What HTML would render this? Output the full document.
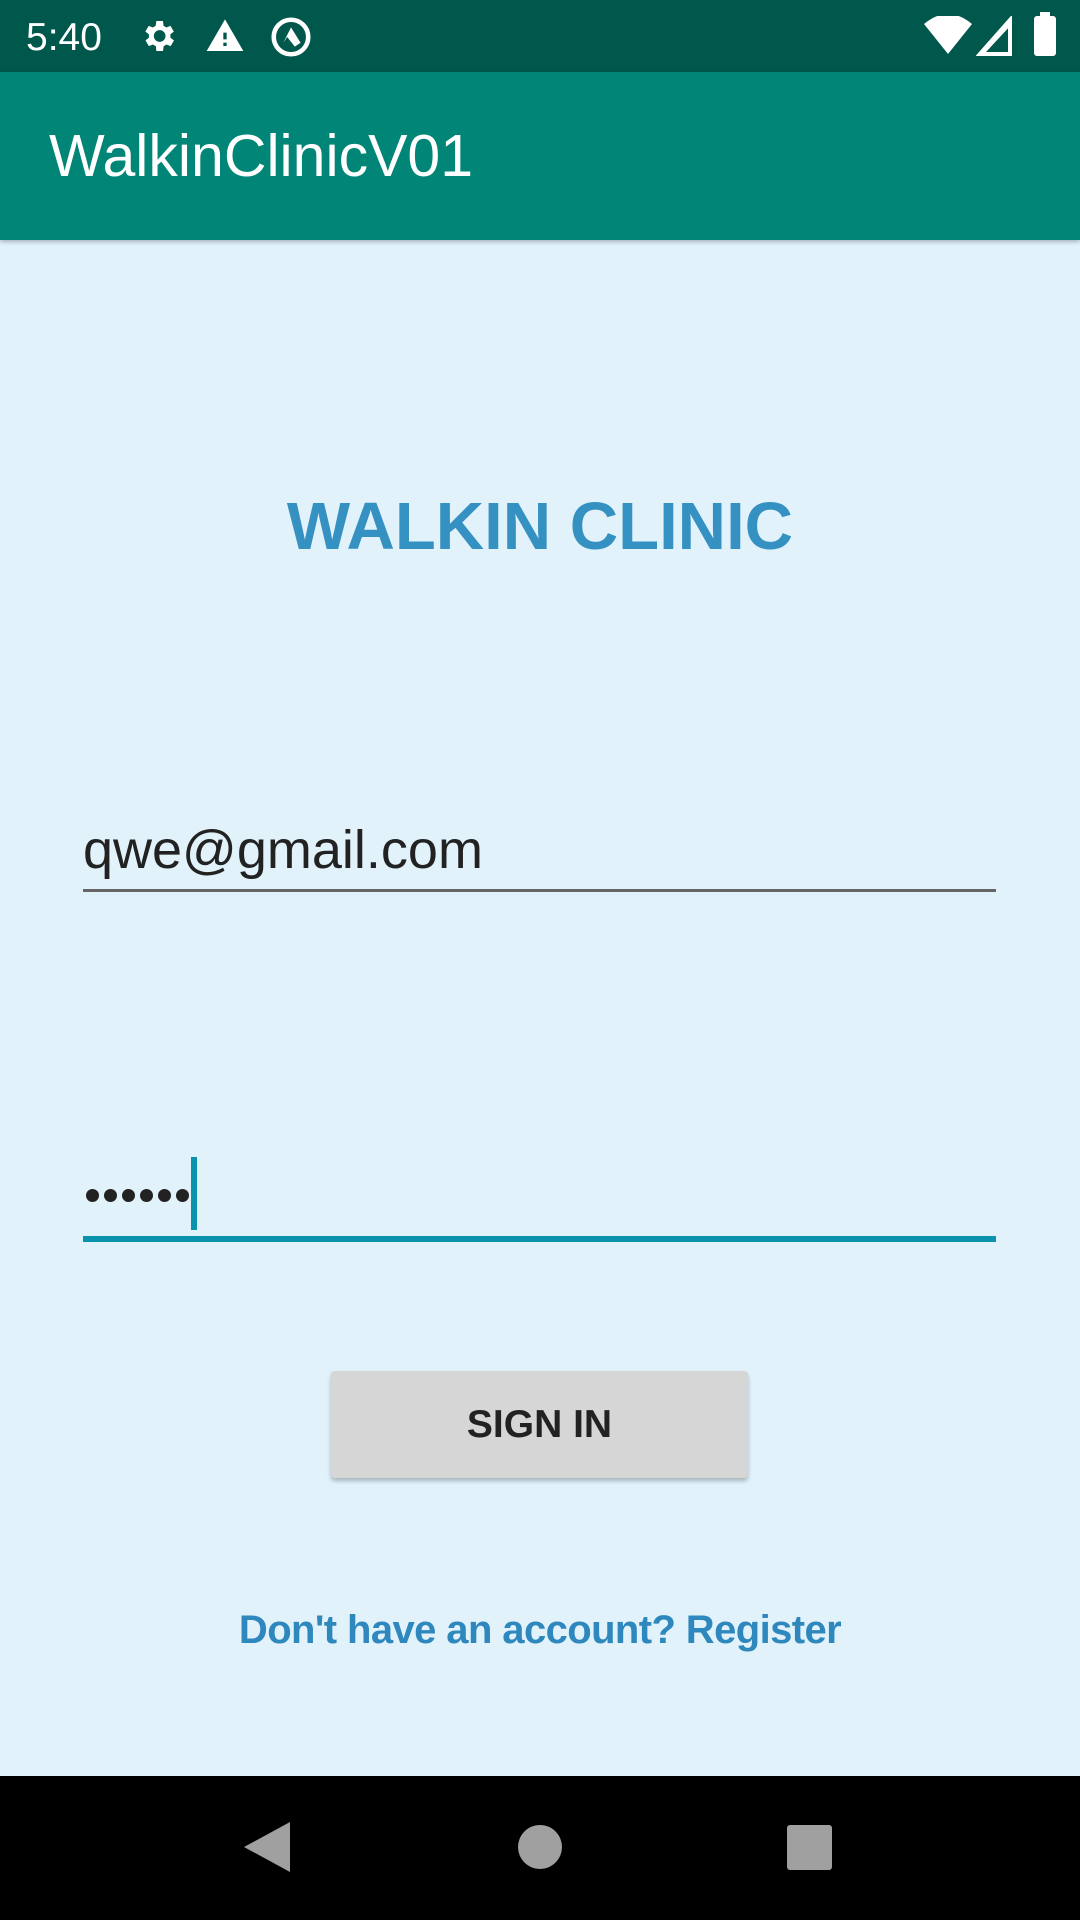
<!DOCTYPE html>
<html><head><meta charset="utf-8"><style>
body{margin:0;width:1080px;height:1920px;background:#e1f2fb;position:relative;overflow:hidden;font-family:"Liberation Sans",sans-serif}
.abs{position:absolute}
.d{position:absolute;top:1189px;width:13px;height:13px;border-radius:50%;background:#222}
</style></head><body>
<div class="abs" style="left:0;top:0;width:1080px;height:72px;background:#00574b"></div>
<div class="abs" style="left:26px;top:16px;color:#fff;font-size:39px;line-height:44px">5:40</div>
<svg class="abs" style="left:138px;top:16px" width="40" height="40" viewBox="0 0 24 24"><path fill="#fff" d="M19.4 13a7.5 7.5 0 000-2l2.1-1.6-2-3.5-2.5 1a7 7 0 00-1.7-1L15 3h-4l-.4 2.9a7 7 0 00-1.7 1l-2.5-1-2 3.5L6.6 11a7.5 7.5 0 000 2l-2.1 1.6 2 3.5 2.5-1a7 7 0 001.7 1L11 21h4l.4-2.9a7 7 0 001.7-1l2.5 1 2-3.5zM13 15.5a3.5 3.5 0 110-7 3.5 3.5 0 010 7z"/></svg>
<svg class="abs" style="left:204px;top:16px" width="42" height="40" viewBox="0 0 24 24"><path fill="#fff" d="M1 21h22L12 2zm12-3h-2v-2h2zm0-4h-2v-4h2z"/></svg>
<svg class="abs" style="left:268px;top:14px" width="46" height="46" viewBox="0 0 24 24"><circle cx="12" cy="12" r="9" fill="none" stroke="#fff" stroke-width="2.4"/><path fill="#fff" d="M12 7l5 8-3 2-4-5-2 3z"/></svg>
<svg class="abs" style="left:924px;top:16px" width="48" height="40" viewBox="0 0 24 20"><path fill="#fff" d="M12 19L0 4Q6-1 12-1t12 5z"/></svg>
<svg class="abs" style="left:976px;top:16px" width="36" height="40" viewBox="0 0 18 20"><path fill="none" stroke="#fff" stroke-width="2" d="M2 19L17 2v17z"/><path fill="#fff" d="M0 20L18 0v4L5 18h13v2z"/></svg>
<div class="abs" style="left:1034px;top:16px;width:22px;height:40px;background:#fff;border-radius:3px"></div>
<div class="abs" style="left:1040px;top:12px;width:10px;height:6px;background:#fff"></div>

<div class="abs" style="left:0;top:72px;width:1080px;height:168px;background:#008577;box-shadow:0 2px 4px rgba(0,0,0,.25)"></div>
<div class="abs" style="left:49px;top:123px;color:#fff;font-size:59px;line-height:66px">WalkinClinicV01</div>

<div class="abs" style="left:0;top:487px;width:1080px;text-align:center;color:#3591c1;font-size:67px;font-weight:bold;line-height:80px">WALKIN CLINIC</div>

<div class="abs" style="left:83px;top:817px;color:#222;font-size:54px;line-height:66px">qwe@gmail.com</div>
<div class="abs" style="left:83px;top:889px;width:913px;height:3px;background:#666"></div>

<div class="d" style="left:86px"></div><div class="d" style="left:104px"></div><div class="d" style="left:122px"></div><div class="d" style="left:140px"></div><div class="d" style="left:158px"></div><div class="d" style="left:176px"></div>
<div class="abs" style="left:191px;top:1157px;width:6px;height:73px;background:#0a93ad"></div>
<div class="abs" style="left:83px;top:1236px;width:913px;height:6px;background:#0a93ad"></div>

<div class="abs" style="left:331px;top:1371px;width:417px;height:107px;background:#d6d6d6;border-radius:4px;box-shadow:0 3px 4px rgba(0,0,0,.25);text-align:center;line-height:107px;font-size:39px;color:#222;font-weight:bold">SIGN IN</div>

<div class="abs" style="left:0;top:1604px;width:1080px;text-align:center;color:#2e88bd;font-size:40px;line-height:52px;font-weight:bold;letter-spacing:-0.6px">Don't have an account? Register</div>

<div class="abs" style="left:0;top:1776px;width:1080px;height:144px;background:#000"></div>
<svg class="abs" style="left:244px;top:1822px" width="46" height="50" viewBox="0 0 46 50"><path fill="#a0a0a0" d="M46 0v50L0 25z"/></svg>
<div class="abs" style="left:518px;top:1825px;width:44px;height:44px;border-radius:50%;background:#a0a0a0"></div>
<div class="abs" style="left:787px;top:1825px;width:45px;height:45px;border-radius:3px;background:#a0a0a0"></div>
</body></html>
